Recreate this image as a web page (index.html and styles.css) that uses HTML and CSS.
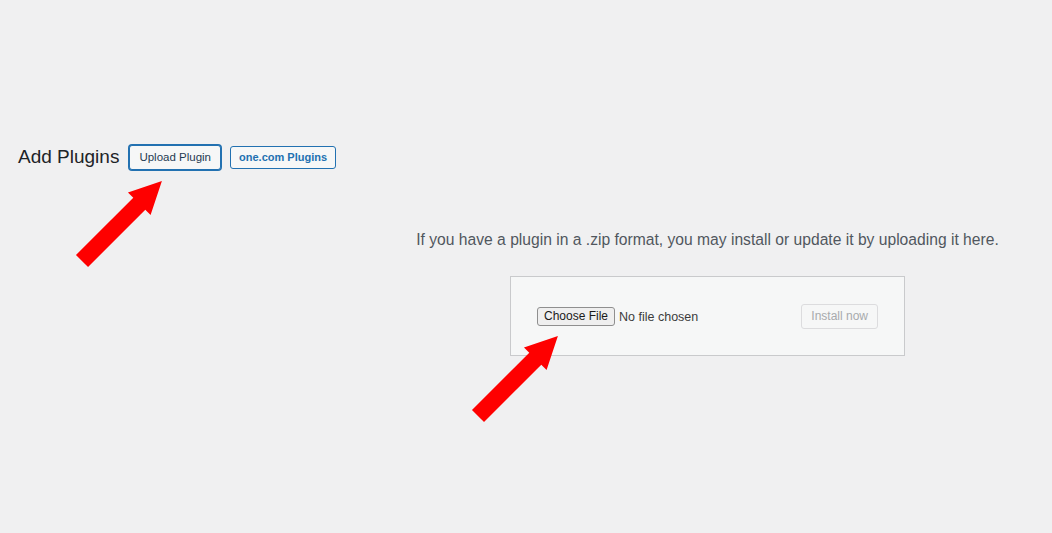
FILE: index.html
```html
<!DOCTYPE html>
<html lang="en">
<head>
    <meta charset="UTF-8">
    <meta name="viewport" content="width=device-width, initial-scale=1.0">
    <title>Add Plugins</title>
    <link rel="stylesheet" href="styles.css">
</head>
<body>
    <div class="wrap">
        <div class="page-header">
            <h1>Add Plugins</h1>
            <a href="#" class="title-action is-focused">Upload Plugin</a>
            <a href="#" class="title-action strong">one.com Plugins</a>
        </div>

        <div class="upload-plugin">
            <p class="install-help">If you have a plugin in a .zip format, you may install or update it by uploading it here.</p>
            <form class="upload-form" onsubmit="return false;">
                <input type="file" id="pluginzip" name="pluginzip">
                <button type="submit" class="install-btn" disabled>Install now</button>
            </form>
        </div>
    </div>

    <!-- annotation arrows -->
    <svg class="annotations" width="1052" height="533" viewBox="0 0 1052 533">
        <g fill="#fe0000">
            <polygon transform="translate(82 261) rotate(-45)" points="0,-8.5 81,-8.5 81,-16 113,0 81,16 81,8.5 0,8.5" />
            <polygon transform="translate(478 416) rotate(-45)" points="0,-8.5 81,-8.5 81,-16 113,0 81,16 81,8.5 0,8.5" />
        </g>
    </svg>
</body>
</html>
```

FILE: styles.css
```css
html, body {
    margin: 0;
    padding: 0;
}
body {
    background-color: #f0f0f1;
    font-family: "Liberation Sans", Arial, sans-serif;
    color: #1d2327;
    width: 1052px;
    height: 533px;
    overflow: hidden;
    position: relative;
}
.wrap {
    padding: 144px 0 0 18px;
}
.page-header {
    display: flex;
    align-items: center;
    gap: 9px;
}
.page-header h1 {
    margin: 0 1px 0 0;
    font-size: 19px;
    font-weight: normal;
    line-height: 26px;
    color: #1d2327;
}
.title-action {
    display: inline-flex;
    align-items: center;
    height: 23px;
    box-sizing: border-box;
    padding: 0 8px;
    border: 1px solid #2271b1;
    border-radius: 3px;
    background: #f6f7f7;
    color: #2271b1;
    font-size: 11px;
    text-decoration: none;
}
.title-action.strong {
    font-weight: bold;
}
.title-action.is-focused {
    height: 25px;
    padding: 0 9px;
    font-size: 11.5px;
    color: #1f3a52;
    box-shadow: 0 0 0 1px #2271b1;
}

.upload-plugin {
    margin-top: 59px;
    padding-left: 345px;
    text-align: center;
}
.install-help {
    margin: 0 0 25px;
    font-size: 15.65px;
    line-height: 22px;
    color: #50575e;
}
.upload-form {
    display: inline-flex;
    align-items: center;
    justify-content: space-between;
    width: 395px;
    height: 80px;
    box-sizing: border-box;
    padding: 26px;
    background: #f6f7f7;
    border: 1px solid #c9cacc;
    text-align: left;
}
.upload-form input[type="file"] {
    font-family: "Liberation Sans", Arial, sans-serif;
    font-size: 12.5px;
    color: #3c3c3c;
    width: 200px;
}
.upload-form input[type="file"]::file-selector-button {
    font-family: "Liberation Sans", Arial, sans-serif;
    font-size: 12px;
    height: 19px;
    padding: 0 6px;
    margin-right: 4px;
    border: 1px solid #8f8f8f;
    border-radius: 3px;
    background: #efefef;
    color: #1a1a1a;
}
.install-btn {
    height: 25px;
    padding: 0 9px;
    font-family: "Liberation Sans", Arial, sans-serif;
    font-size: 12px;
    color: #a7aaad;
    background: #f6f7f7;
    border: 1px solid #dcdcde;
    border-radius: 3px;
}

.annotations {
    position: absolute;
    top: 0;
    left: 0;
    pointer-events: none;
}
```
